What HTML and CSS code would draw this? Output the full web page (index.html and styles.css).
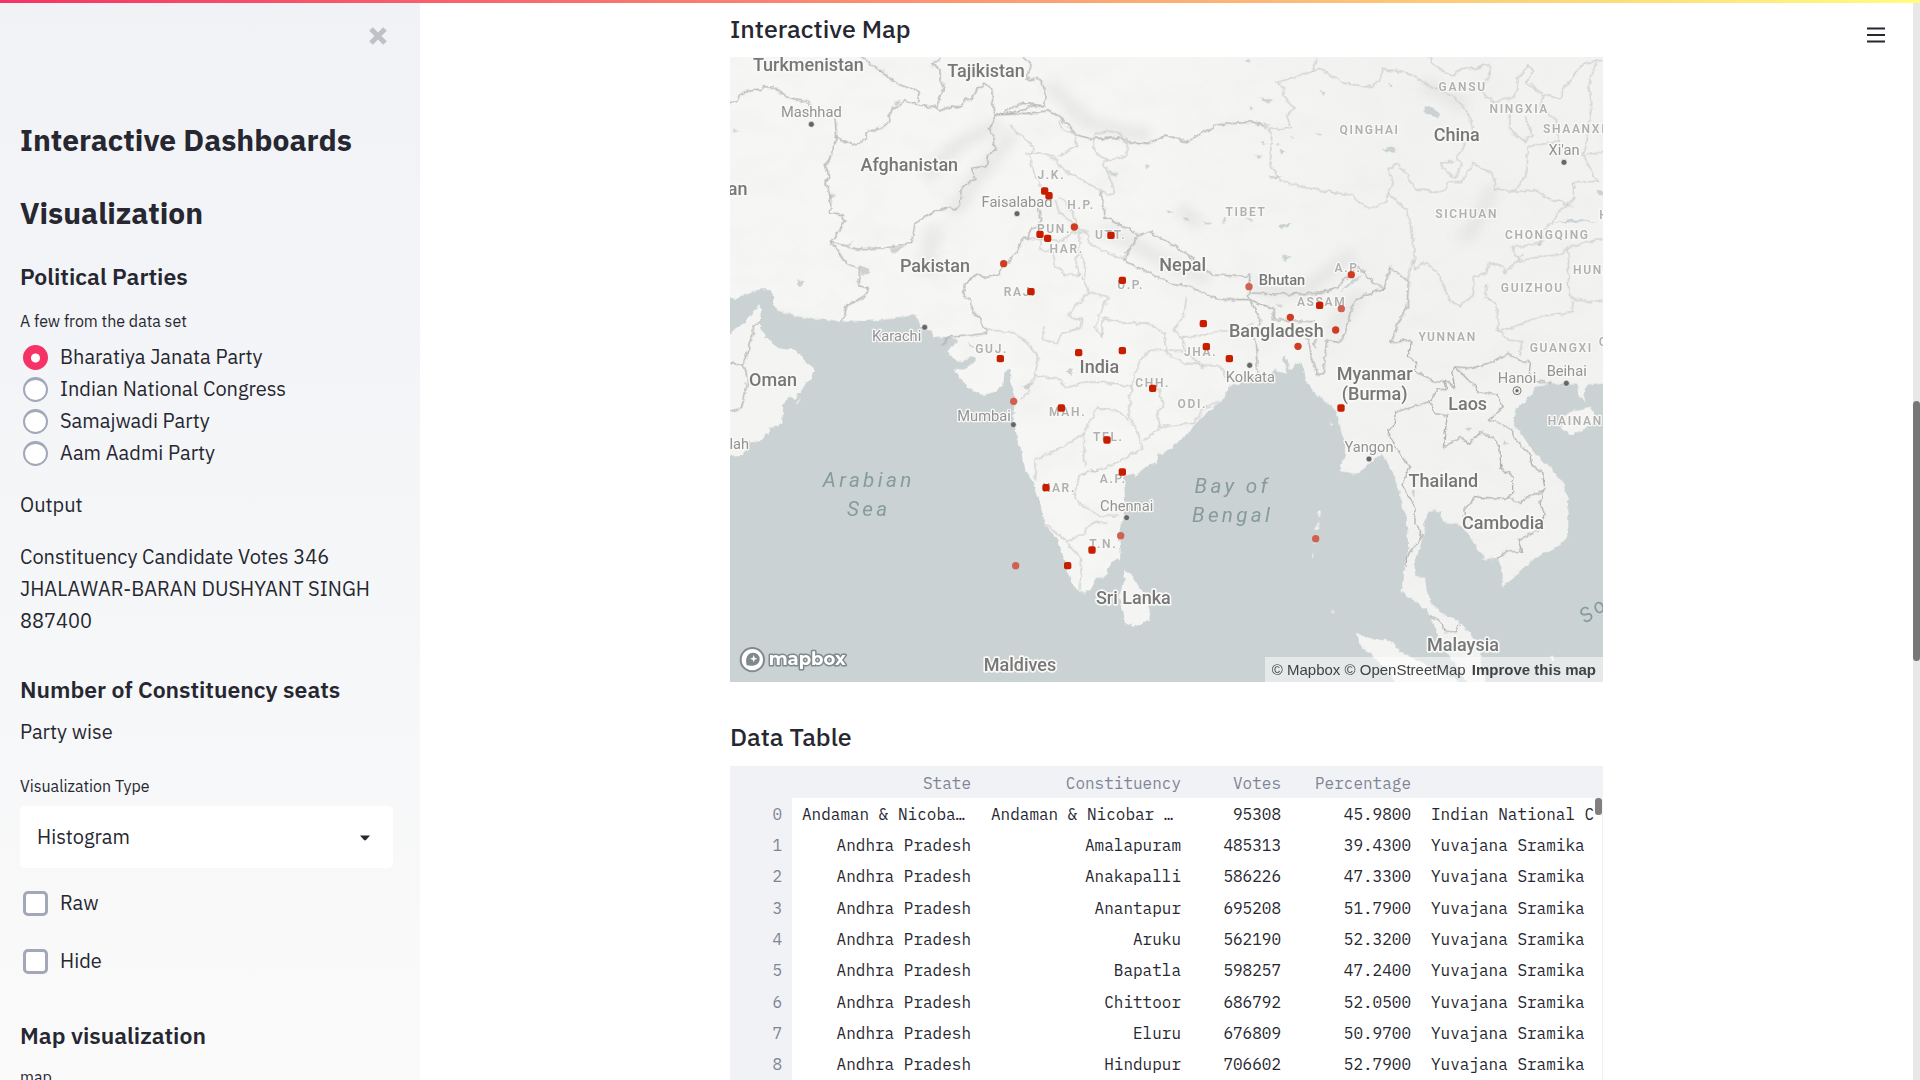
FILE: index.html
```html
<!DOCTYPE html>
<html lang="en">
<head>
<meta charset="utf-8">
<title>Interactive Dashboards</title>
<link rel="stylesheet" href="styles.css">
</head>
<body>
<div class="decoration"></div>
<div class="app">
  <aside class="sidebar">
    <button class="icon-button close" aria-label="Close sidebar">
      <svg width="18" height="18" viewBox="0 0 18 18"><path d="M2 2L16 16M16 2L2 16" stroke="#c0c1c6" stroke-width="5" fill="none"/></svg>
    </button>
    <h1 class="title">Interactive Dashboards</h1>
    <h1 class="title">Visualization</h1>
    <h3 class="subhead first">Political Parties</h3>
    <fieldset class="parties">
      <legend class="small-label">A few from the data set</legend>
      <label class="choice"><input class="radio" type="radio" name="party" checked><span>Bharatiya Janata Party</span></label>
      <label class="choice"><input class="radio" type="radio" name="party"><span>Indian National Congress</span></label>
      <label class="choice"><input class="radio" type="radio" name="party"><span>Samajwadi Party</span></label>
      <label class="choice"><input class="radio" type="radio" name="party"><span>Aam Aadmi Party</span></label>
    </fieldset>
    <p class="text">Output</p>
    <p class="text">Constituency Candidate Votes 346 JHALAWAR-BARAN DUSHYANT SINGH 887400</p>
    <h3 class="subhead">Number of Constituency seats</h3>
    <p class="text party-wise">Party wise</p>
    <label class="small-label" for="viz">Visualization Type</label>
    <div class="select-box">
      <select id="viz" class="select"><option>Histogram</option></select>
      <svg class="caret" width="10" height="6" viewBox="0 0 10 6"><path d="M0 0.5H10L6 5Q5 5.8 4 5Z" fill="#262730"/></svg>
    </div>
    <label class="choice tick"><input class="checkbox" type="checkbox"><span>Raw</span></label>
    <label class="choice tick"><input class="checkbox" type="checkbox"><span>Hide</span></label>
    <h3 class="subhead last">Map visualization</h3>
    <p class="small-label">map</p>
  </aside>

  <main class="main">
    <button class="icon-button menu" aria-label="Main menu">
      <svg width="18" height="16" viewBox="0 0 18 16"><path d="M0 1.5H18M0 8H18M0 14.5H18" stroke="#262730" stroke-width="2"/></svg>
    </button>
    <div class="content">
      <h2 class="heading">Interactive Map</h2>
      <div class="map">
        <svg class="map-canvas" viewBox="30 171 2619 1875" role="img" aria-label="Map of South Asia">
          <defs>
            <filter id="rough" x="-5%" y="-5%" width="110%" height="110%">
              <feTurbulence type="fractalNoise" baseFrequency="0.05" numOctaves="3" seed="4"/>
              <feDisplacementMap in="SourceGraphic" scale="16" xChannelSelector="R" yChannelSelector="G"/>
            </filter>
            <filter id="relief" x="0" y="0" width="100%" height="100%">
              <feTurbulence type="fractalNoise" baseFrequency="0.008 0.012" numOctaves="4" seed="8"/>
              <feColorMatrix values="0 0 0 0 .84  0 0 0 0 .84  0 0 0 0 .84  2.6 0 0 0 -1.15"/>
            </filter>
            <filter id="soft" x="-30%" y="-30%" width="160%" height="160%"><feGaussianBlur stdDeviation="16"/></filter>
            <linearGradient id="ground"><stop offset=".45" stop-color="#f6f6f4"/><stop offset=".75" stop-color="#f2f2f1"/></linearGradient>
          </defs>
          <rect x="30" y="171" width="2619" height="1875" fill="url(#ground)"/>
          <rect x="30" y="171" width="2619" height="1875" filter="url(#relief)" opacity=".35"/>
          <g class="ridge" filter="url(#soft)">
            <path d="M610 530L720 430L840 370M700 640L780 520L880 400M980 250L1110 370L1290 410M1380 620L1440 680"/>
            <path d="M1150 680L1320 780L1470 840M1600 860L1760 870L1820 820L1900 760M2230 720L2280 650L2320 560"/>
            <path d="M620 830L640 680M1830 1000L1920 880M2110 250L2240 320"/>
          </g>
          <g filter="url(#rough)">
            <g class="water">
              <path d="M0 892L50 897L75 885L115 868L150 866L158 885L162 918L185 935L225 948L270 955L330 960L365 966L430 962L480 960L530 955L583 945L598 965L605 985L635 992L640 1012L665 1015L690 1010L712 1020L700 1035L685 1055L700 1075L730 1085L752 1072L770 1074L755 1092L730 1108L703 1108L715 1128L740 1160L790 1186L830 1173L850 1155L853 1115L872 1107L875 1150L885 1200L880 1250L890 1310L905 1360L910 1400L930 1430L945 1465L958 1500L968 1540L975 1575L1010 1615L1030 1670L1040 1715L1065 1760L1090 1782L1112 1770L1125 1740L1162 1725L1165 1705L1180 1682L1200 1680L1202 1650L1195 1595L1210 1560L1215 1500L1212 1430L1240 1420L1248 1432L1268 1405L1310 1390L1315 1365L1345 1350L1390 1315L1430 1265L1470 1230L1515 1190L1525 1160L1560 1150L1610 1122L1640 1128L1665 1110L1700 1122L1688 1075L1695 1065L1710 1110L1745 1085L1755 1140L1780 1175L1830 1215L1850 1235L1860 1280L1875 1330L1875 1365L1860 1410L1910 1425L1945 1390L1985 1365L2000 1380L2020 1420L2040 1480L2045 1520L2060 1550L2065 1650L2050 1710L2045 1775L2080 1800L2120 1830L2150 1890L2180 1960L2220 2010L2260 2080L0 2080Z"/>
              <path transform="translate(1320 1020)" d="M775 712L795 712L800 750L815 790L850 825L890 840L930 880L960 930L965 990L985 1060L1400 1060L1400 125L1290 130L1272 150L1275 185L1255 165L1250 130L1170 130L1130 140L1110 170L1070 205L1060 250L1090 290L1120 335L1170 380L1210 430L1225 490L1225 590L1190 620L1150 640L1110 665L1075 700L1050 725L1025 740L1025 680L1010 655L985 660L950 625L935 600L910 560L880 550L845 545L845 512L810 515L800 530L790 590L770 650L762 690Z"/>
              <path d="M415 795L440 805L450 820L425 825ZM510 745L560 735L535 755L515 760ZM365 735L405 722L385 735ZM522 302L540 300L540 312L525 315ZM235 840L250 845L245 862L232 858ZM330 575L345 588L332 594ZM465 200L495 212L480 215ZM38 390L60 392L42 398ZM1160 515L1195 520L1185 530ZM1273 495L1290 498L1280 505Z"/>
              <path transform="translate(1320 0)" d="M790 320L815 318L838 340L835 355L795 340ZM300 295L340 302L325 310ZM265 322L280 325L272 335ZM668 447L705 440L705 458L680 455ZM355 675L392 668L385 680L362 690ZM250 182L272 180L268 190ZM478 272L498 278L488 282ZM685 252L702 256L690 264ZM308 366L328 374L318 378ZM280 462L308 468L295 474ZM358 450L380 456L365 464ZM388 408L405 412L395 416ZM20 630L42 637L25 640ZM68 655L88 657L75 662ZM130 662L158 668L145 677ZM182 670L195 650L198 660ZM258 652L280 660L270 664ZM362 762L395 770L375 782ZM300 425L320 428L312 433ZM348 432L366 434L355 438ZM325 530L365 525L345 538ZM465 400L485 405L478 410ZM540 875L575 840L605 830L575 855ZM350 915L370 912L355 922ZM1310 572L1329 576L1329 584L1312 582ZM1185 668L1230 660L1270 658L1305 668L1265 664L1220 668ZM1125 735L1155 720L1140 735Z"/>
              <path d="M1040 1115L1060 1105L1055 1128ZM1110 1405L1140 1412L1120 1418ZM905 1160L945 1145L925 1168ZM745 1025L765 1045L750 1042ZM2235 1285L2258 1288L2245 1296ZM2345 1318L2370 1335L2350 1330ZM2075 1475L2085 1470L2082 1490Z"/>
            </g>
            <g class="land">
              <path d="M0 1020L60 978L90 950L118 915L125 940L122 975L130 1000L150 1022L180 1045L235 1055L250 1080L282 1105L275 1130L250 1160L225 1198L210 1190L190 1210L187 1268L150 1285L130 1320L75 1325L85 1340L70 1365L0 1368Z"/>
              <path d="M1212 1708L1235 1725L1255 1760L1275 1790L1290 1825L1285 1860L1240 1882L1215 1868L1205 1830L1200 1780L1214 1740Z"/>
              <g transform="translate(1320 1020)">
                <path d="M1200 245L1230 215L1290 200L1305 220L1298 250L1240 285L1205 270ZM588 882L610 885L640 898L690 900L720 935L760 955L800 975L880 1010L905 1050L720 1050L680 990L630 940L595 905ZM475 515H482L480 530H475ZM472 545H478L474 570H468ZM462 600L470 598L466 612ZM456 640H461L458 652H454ZM515 805L523 815L520 822L515 816ZM1170 950L1182 946L1184 960L1175 966ZM965 655H985L978 662ZM510 245L525 250L515 256Z"/>
              </g>
              <path d="M1690 1115L1696 1090L1702 1112ZM230 1208L243 1195L236 1210Z"/>
            </g>
            <g class="border">
              <path d="M30 310L50 305L58 288L85 270L125 268L130 260L165 262L175 275L215 295L260 302L272 320M345 355L350 410L330 475L315 495L325 520L318 550L332 590L332 637L368 645L375 665L332 725L410 747L500 743L575 728L585 670L640 635L685 622L705 630L718 615L725 560L765 538L755 505L800 498L805 465L825 450L822 415L808 388L830 345L870 340L940 318L975 318L975 290L968 240L920 238L930 195L910 171M350 410L398 435L438 418L438 398L480 385L505 370L512 325L545 315L555 302L620 320L640 318L658 333L695 318L720 322L735 298L758 296L770 270L795 250L815 265L820 330L828 348L870 325L910 310L975 318M425 171L540 255L598 275L593 305M650 322L660 290L675 265L660 240L660 210L632 190L660 178M332 725L380 790L418 805L418 858L442 865L438 890L400 905L380 912L378 932L365 966"/>
              <path d="M830 345L925 340L985 332L1025 355L1070 405L1110 415L1215 415L1220 425L1285 430L1335 405L1400 425L1490 375L1600 365L1640 382M955 620L965 660L930 695L928 715L908 715L885 765L845 800L838 822L790 835L770 820L730 860L728 885L755 905L755 935L780 950L800 1000L720 1010L685 1010L665 1035"/>
              <path d="M1140 575L1150 605L1155 650L1255 705L1290 695L1400 760L1475 825L1590 830L1585 860M1255 705L1210 780L1290 820L1350 848L1410 860L1485 895L1530 900L1585 898L1590 825M1585 878L1660 882L1800 880L1850 865L1910 800L1960 845L1992 865L2010 800L2065 845L2062 920L2030 980L2012 1030L2075 1018M1992 865L1920 890L1895 920L1875 1000L1855 1030L1820 1020L1810 1120L1790 1125L1770 1060L1760 1000M1585 898L1660 925L1660 960L1785 965L1785 1045M1590 900L1620 960L1605 1010L1612 1100L1615 1120"/>
              <path d="M30 1090L70 1093L100 1000L100 975L122 965M70 1093L85 1140L65 1222L30 1235"/>
              <g transform="translate(1320 1020)"><path d="M755 0L745 50L770 70L770 95L830 130L855 120L860 145L830 150L810 185L710 215L700 260L683 272L705 320L750 380L725 435L765 495L765 550L787 590L740 650L738 680M855 120L885 145L875 95L885 80L935 85L1000 65L1045 40L1080 62L1112 65L1108 100L1130 122L1175 130M885 80L940 135L955 155L1010 165L1030 200L985 238L1050 265L1070 300L1110 345L1115 375L1145 395L1152 455L1105 468L1080 490L1050 475L945 472L912 510L915 560M810 185L825 220L862 228L855 280L850 322L900 292L925 308L960 278L1000 290L1020 325L1022 385L1058 410L1058 460L1040 475M1150 460L1140 490L1152 520L1145 565L1075 600L1085 635L1040 635L1010 655M810 830L850 852L855 878L885 872L898 852"/></g>
            </g>
            <g class="state">
              <path d="M915 462L960 458L1015 470L1070 440L1060 400L1025 385L1020 360M870 375L895 400L940 440L935 460M995 470L1035 515L1070 530L1130 565L1165 585L1185 580L1175 545L1150 490L1165 480L1220 470L1222 425L1200 400L1160 392L1125 405L1118 440L1135 465L1165 480M930 462L935 500L960 560M1020 590L1060 640L1075 690L1105 695M1005 600L1020 640L1060 670M930 715L1030 722L1060 695L1100 700L1115 735L1170 760L1220 780M960 720L960 750L1000 755L1005 795L1035 825L1080 825L1065 790L1075 760L1080 695M1080 750L1095 800L1090 835L1105 875L1165 890L1145 930L1125 980L1145 1010L1150 955L1190 965L1285 970L1335 1000L1340 1060M1105 880L1045 940L1060 955L1085 960L1080 985L1025 1000L1010 1030L970 1020L975 980M800 990L875 995L920 1025L955 1075L945 1125L930 1160"/>
              <path d="M945 1125L1025 1140L1035 1165L1095 1145L1190 1150L1235 1160L1260 1080L1290 1050L1400 1055M1235 1160L1225 1240L1255 1300L1265 1345L1180 1395L1095 1420L1080 1425L1060 1480L1075 1510L1110 1530L1145 1550L1195 1545M905 1200L930 1170L918 1155M1090 1300L1060 1320L1010 1350L945 1380L945 1440M1090 1300L1110 1265L1130 1225L1200 1235L1225 1260M1090 1300L1095 1400M975 1570L1040 1625L1095 1600L1110 1570L1160 1565M1040 1625L1085 1680L1080 1770M1340 1060L1400 1090L1500 1100L1520 1130M1270 1325L1320 1280L1310 1230L1330 1220L1315 1160M1320 1280L1420 1270L1450 1225L1510 1200"/>
              <path d="M1400 890L1390 950L1360 990L1380 1010L1440 1010L1500 990L1560 990L1600 970M1380 1010L1400 1060L1450 1100"/>
              <g transform="translate(1320 0)"><path d="M470 171L455 215L350 248L370 260L372 290L405 325L380 345L395 385L322 388L335 410L330 495L360 540L420 560L530 580L580 585L600 610L630 625L680 605L685 580L740 630L755 680L763 770L765 810M455 212L485 208L550 250L635 262L665 235L668 208L750 220L810 260L880 290L920 330L940 385L910 440L890 475L905 495L885 535L845 500L845 485L885 485M685 575L700 550L685 510L710 490L740 520L765 565L830 578L860 565L865 545L905 545L940 490L1000 525L1005 565L1060 575L1120 570L1185 605L1195 600L1240 625M805 171L840 210L880 230L905 205L945 205L990 190L990 225L960 270L1000 305L1065 290L1075 235L1105 195L1118 215L1100 245L1150 285L1200 295L1215 260L1270 190L1329 180M1150 285L1140 320L1190 360L1195 425L1105 440L1100 520L1065 575M1050 340L1050 390L1095 425L1115 405L1095 350M1310 180L1285 260L1295 310L1280 430L1270 460L1290 510L1315 545L1240 545L1240 600L1190 640L1180 670L1145 690L1145 725L1080 740L1055 740L1080 785L1125 770L1200 765L1225 740L1225 860L1230 895L1290 905L1329 900M1280 465L1329 455M1225 740L1329 715M765 810L790 785L830 815L870 900L900 920L940 885L940 830L980 820L985 790L1030 800L1035 820L1090 765M980 850L975 890L1010 915L1015 990L1050 985L1135 950L1235 935L1240 905M1015 985L1045 1020L1085 1025L1080 1065M740 840L765 770"/></g>
            </g>
          </g>

          <g class="country">
            <text x="265" y="213">Turkmenistan</text><text x="798" y="230">Tajikistan</text><text x="568" y="514">Afghanistan</text>
            <text x="53" y="584">an</text><text x="645" y="815">Pakistan</text><text x="1388" y="812">Nepal</text>
            <text x="2210" y="422">China</text><text x="1669" y="1012">Bangladesh</text><text class="minor" x="1686" y="855">Bhutan</text>
            <text x="159" y="1159">Oman</text><text x="1138" y="1119">India</text><text x="1240" y="1812">Sri Lanka</text>
            <text x="900" y="2013">Maldives</text><text x="1964" y="1140">Myanmar</text><text x="1964" y="1201">(Burma)</text>
            <text x="2243" y="1230">Laos</text><text x="2170" y="1460">Thailand</text><text x="2349" y="1587">Cambodia</text>
            <text x="2229" y="1954">Malaysia</text>
          </g>
          <g class="city">
            <text x="274" y="351">Mashhad</text><text x="891" y="620">Faisalabad</text><text x="530" y="1023">Karachi</text>
            <text x="792" y="1262">Mumbai</text><text x="1220" y="1532">Chennai</text><text x="58" y="1348">lah</text>
            <text x="2532" y="465">Xi'an</text><text x="1591" y="1147">Kolkata</text><text x="2391" y="1149">Hanoi</text>
            <text x="2540" y="1128">Beihai</text><text x="1947" y="1356">Yangon</text>
          </g>
          <g class="province">
            <text x="994" y="537">J.K.</text><text x="1083" y="626">H.P.</text><text x="1002" y="699">PUN.</text><text x="1172" y="718">UTT.</text>
            <text x="1040" y="758">HAR.</text><text x="1232" y="867">U.P.</text><text x="900" y="887">RAJ.</text><text x="815" y="1058">GUJ.</text>
            <text x="1043" y="1247">MAH.</text><text x="1165" y="1324">TEL.</text><text x="1180" y="1450">A.P.</text><text x="1018" y="1477">KAR.</text>
            <text x="1150" y="1644">T.N.</text><text x="1298" y="1160">CHH.</text><text x="1442" y="1068">JHA.</text><text x="1417" y="1223">ODI.</text>
            <text x="1884" y="815">A.P.</text><text x="1805" y="919">ASSAM</text><text x="1578" y="647">TIBET</text><text x="1949" y="402">QINGHAI</text>
            <text x="2228" y="273">GANSU</text><text x="2398" y="338">NINGXIA</text><text class="cut" x="2469" y="398">SHAANXI</text>
            <text x="2240" y="654">SICHUAN</text><text x="2482" y="717">CHONGQING</text><text x="2437" y="875">GUIZHOU</text>
            <text class="cut" x="2559" y="823">HUNAN</text><text x="2183" y="1023">YUNNAN</text><text x="2524" y="1056">GUANGXI</text><text x="2566" y="1275">HAINAN</text>
            <text class="cut" x="2638" y="657">H</text><text class="cut" x="2636" y="1038">G</text>
          </g>
          <g class="sea">
            <text x="446" y="1460">Arabian</text><text x="446" y="1547">Sea</text>
            <text x="1538" y="1479">Bay of</text><text x="1538" y="1567">Bengal</text>
            <text class="cut" x="2596" y="1872" transform="rotate(-35 2596 1872)">Sou</text>
          </g>
          <g class="place">
            <circle cx="274" cy="373" r="9"/><circle cx="891" cy="641" r="9"/><circle cx="614" cy="982" r="9"/><circle cx="880" cy="1274" r="9"/>
            <circle cx="1220" cy="1553" r="9"/><circle cx="2532" cy="487" r="9"/><circle cx="1589" cy="1096" r="9"/><circle cx="2539" cy="1150" r="9"/>
            <circle cx="1947" cy="1377" r="9"/><circle cx="2391" cy="1172" r="6"/><circle class="ring" cx="2391" cy="1172" r="12"/>
          </g>
          <g class="seat solid">
            <rect x="963" y="562" width="22" height="22" rx="6"/><rect x="976" y="576" width="22" height="22" rx="6"/>
            <rect x="949" y="692" width="22" height="22" rx="6"/><rect x="972" y="704" width="22" height="22" rx="6"/>
            <rect x="1162" y="695" width="22" height="22" rx="6"/><rect x="922" y="864" width="22" height="22" rx="6"/>
            <rect x="1196" y="830" width="22" height="22" rx="6"/><rect x="830" y="1065" width="22" height="22" rx="6"/>
            <rect x="1065" y="1047" width="22" height="22" rx="6"/><rect x="1196" y="1041" width="22" height="22" rx="6"/>
            <rect x="1287" y="1154" width="22" height="22" rx="6"/><rect x="1013" y="1213" width="22" height="22" rx="6"/>
            <rect x="1150" y="1309" width="22" height="22" rx="6"/><rect x="1196" y="1405" width="22" height="22" rx="6"/>
            <rect x="967" y="1452" width="22" height="22" rx="6"/><rect x="1105" y="1639" width="22" height="22" rx="6"/>
            <rect x="1032" y="1686" width="22" height="22" rx="6"/><rect x="1439" y="960" width="22" height="22" rx="6"/>
            <rect x="1448" y="1029" width="22" height="22" rx="6"/><rect x="1517" y="1065" width="22" height="22" rx="6"/>
            <rect x="1788" y="905" width="22" height="22" rx="6"/><rect x="1852" y="1213" width="22" height="22" rx="6"/>
          </g>
          <g class="seat medium">
            <circle cx="1063" cy="681" r="11"/><circle cx="851" cy="791" r="11"/><circle cx="1894" cy="824" r="11"/>
            <circle cx="1711" cy="952" r="11"/><circle cx="1847" cy="990" r="11"/><circle cx="1734" cy="1039" r="11"/>
          </g>
          <g class="seat light">
            <circle cx="1587" cy="860" r="11"/><circle cx="1864" cy="926" r="11"/><circle cx="881" cy="1204" r="11"/>
            <circle cx="1202" cy="1607" r="11"/><circle cx="887" cy="1697" r="11"/><circle cx="1787" cy="1616" r="11"/>
          </g>
          <g class="brand">
            <circle cx="97" cy="1979" r="35" fill="#fff" stroke="#7f8a8b" stroke-width="6"/>
            <path d="M80 1996C74 1972 84 1958 100 1958A19 19 0 0 1 119 1977C119 1993 104 2001 80 1996Z" fill="#7f8a8b"/>
            <path d="M101 1965L104 1973L112 1976L104 1979L101 1987L98 1979L90 1976L98 1973Z" fill="#fff"/>
            <text x="146" y="1996">mapbox</text>
          </g>
        </svg>
        <div class="attribution"><a href="#mapbox">© Mapbox</a> <a href="#osm">© OpenStreetMap</a> <a class="improve" href="#improve">Improve this map</a></div>
      </div>

      <h2 class="heading second">Data Table</h2>
      <div class="table-frame">
        <table class="data">
          <colgroup><col class="c-index"><col class="c-state"><col class="c-const"><col class="c-votes"><col class="c-pct"><col></colgroup>
          <thead><tr><th></th><th>State</th><th>Constituency</th><th>Votes</th><th>Percentage</th><th></th></tr></thead>
          <tbody>
            <tr><th>0</th><td>Andaman &amp; Nicobar Islands</td><td>Andaman &amp; Nicobar Islands</td><td>95308</td><td>45.9800</td><td>Indian National Congress</td></tr>
            <tr><th>1</th><td>Andhra Pradesh</td><td>Amalapuram</td><td>485313</td><td>39.4300</td><td>Yuvajana Sramika</td></tr>
            <tr><th>2</th><td>Andhra Pradesh</td><td>Anakapalli</td><td>586226</td><td>47.3300</td><td>Yuvajana Sramika</td></tr>
            <tr><th>3</th><td>Andhra Pradesh</td><td>Anantapur</td><td>695208</td><td>51.7900</td><td>Yuvajana Sramika</td></tr>
            <tr><th>4</th><td>Andhra Pradesh</td><td>Aruku</td><td>562190</td><td>52.3200</td><td>Yuvajana Sramika</td></tr>
            <tr><th>5</th><td>Andhra Pradesh</td><td>Bapatla</td><td>598257</td><td>47.2400</td><td>Yuvajana Sramika</td></tr>
            <tr><th>6</th><td>Andhra Pradesh</td><td>Chittoor</td><td>686792</td><td>52.0500</td><td>Yuvajana Sramika</td></tr>
            <tr><th>7</th><td>Andhra Pradesh</td><td>Eluru</td><td>676809</td><td>50.9700</td><td>Yuvajana Sramika</td></tr>
            <tr><th>8</th><td>Andhra Pradesh</td><td>Hindupur</td><td>706602</td><td>52.7900</td><td>Yuvajana Sramika</td></tr>
          </tbody>
        </table>
        <div class="table-track"><div class="table-thumb"></div></div>
      </div>
    </div>
  </main>
  <div class="scrollbar"><div class="scroll-thumb"></div></div>
</div>
</body>
</html>
```
FILE: styles.css
```css
* { box-sizing: border-box; }
body {
  margin: 0;
  height: 100vh;
  overflow: hidden;
  background: #fff;
  color: #262730;
  font-family: "IBM Plex Sans", "Noto Sans", sans-serif;
  font-size: 20px;
  font-weight: 400;
  line-height: 32px;
}
.decoration {
  position: absolute;
  z-index: 2;
  top: 0;
  left: 0;
  right: 0;
  height: 3px;
  background: linear-gradient(to right, #f63366, #fffd80);
}
.app {
  display: grid;
  grid-template-columns: 420px 1fr 7px;
  height: 100vh;
}
h1, h2, h3, p { margin: 0; }

.sidebar {
  position: relative;
  overflow: hidden;
  padding: 120px 27px 0 20px;
  background: linear-gradient(#f0f2f6, #fafafa);
}
.icon-button {
  display: flex;
  padding: 0;
  border: 0;
  background: none;
  cursor: pointer;
}
.close { position: absolute; top: 27px; right: 33px; }
.menu { position: absolute; top: 27px; right: 28px; }
.title {
  font-size: 30px;
  font-weight: 700;
  line-height: 40px;
}
.title + .title { margin-top: 33px; }
.subhead {
  margin-top: 36px;
  font-size: 23px;
  font-weight: 600;
  line-height: 32px;
}
.subhead.first { margin-top: 27px; }
.subhead.last { margin: 42px 0 14px; }
.parties {
  margin: 17px 0 20px;
  padding: 0;
  border: 0;
}
.small-label {
  display: block;
  margin-bottom: 8px;
  padding: 0;
  font-size: 16px;
  line-height: 24px;
}
.text { margin-bottom: 20px; }
.party-wise { margin: 11px 0 26px; }
.choice {
  display: flex;
  align-items: center;
  gap: 12px;
  padding-left: 3px;
}
.radio, .checkbox {
  appearance: none;
  width: 25px;
  height: 25px;
  margin: 0;
  border: 2px solid #a3a8b8;
  border-top-width: 3px;
  background: #fff;
}
.radio { border-radius: 50%; }
.radio:checked {
  border-color: #f63366;
  background: radial-gradient(circle, #fff 4px, #f63366 5px);
}
.checkbox { border-width: 3px; border-radius: 5px; }
.tick { margin-top: 19px; }
.tick + .tick { margin-top: 26px; }
.select-box { position: relative; }
.select {
  appearance: none;
  display: block;
  width: 100%;
  height: 62px;
  padding: 0 17px;
  border: 0;
  border-radius: 5px;
  background: #fff;
  color: inherit;
  font: inherit;
}
.caret { position: absolute; top: 29px; right: 23px; pointer-events: none; }

.main { position: relative; overflow: hidden; padding-top: 13px; }
.content { max-width: 873px; margin: 0 auto; }
.heading {
  margin-bottom: 12px;
  font-size: 25px;
  font-weight: 500;
  line-height: 32px;
}
.heading.second { margin: 39px 0 13px; }

.map { position: relative; background: #cad2d3; }
.map-canvas { display: block; width: 100%; }
.map-canvas text {
  font-family: "DIN Pro", Roboto, sans-serif;
  text-anchor: middle;
  paint-order: stroke;
  stroke-linejoin: round;
}
.map-canvas .cut { text-anchor: start; }
.ridge path { fill: none; stroke: #d9d9da; stroke-width: 44; opacity: .45; }
.water path { fill: #cad2d3; }
.land path { fill: #f4f4f2; }
.border path, .state path { fill: none; stroke: #b2b2b2; stroke-width: 4; stroke-linejoin: round; }
.state path { stroke: #cfcfcf; }
.country text { font-size: 54px; font-weight: 500; fill: #777; stroke: #f8f8f7; stroke-width: 10px; }
.country .minor { font-size: 44px; }
.city text { font-size: 44px; font-weight: 400; fill: #939393; stroke: #f8f8f7; stroke-width: 8px; }
.province text { font-size: 36px; font-weight: 600; letter-spacing: 5px; fill: #b0b0b0; stroke: #f8f8f7; stroke-width: 8px; }
.sea text { font-size: 62px; font-style: italic; letter-spacing: 10px; fill: #879b9c; }
.place circle { fill: #666; stroke: #f8f8f7; stroke-width: 2; }
.place .ring { fill: none; stroke: #777; stroke-width: 3; }
.seat.solid { fill: #c81e00; }
.seat.medium { fill: #d03c22; }
.seat.light { fill: #d06050; }
.map-canvas .brand text {
  font-family: Montserrat, Inter, sans-serif;
  font-size: 54px;
  font-weight: 700;
  text-anchor: start;
  fill: #fff;
  stroke: #7f8a8b;
  stroke-width: 9px;
}
.attribution {
  position: absolute;
  right: 0;
  bottom: 0;
  padding: 0 7px;
  background: rgba(255, 255, 255, .5);
  font: 15px/25px "Helvetica Neue", "Liberation Sans", Arial, sans-serif;
}
.attribution a { color: #404446; text-decoration: none; }
.attribution .improve { margin-left: 2px; font-weight: 700; }

.table-frame {
  display: grid;
  grid-template-columns: 1fr 7px;
  border: 1px solid #f0f2f6;
  overflow: hidden;
}
.data {
  width: 100%;
  height: 313px;
  table-layout: fixed;
  border-spacing: 0;
  font: 400 16px/30px "IBM Plex Mono", "Liberation Mono", monospace;
}
.c-index { width: 61px; }
.c-state { width: 189px; }
.c-const { width: 210px; }
.c-votes { width: 100px; }
.c-pct { width: 130px; }
.data th, .data td {
  padding: 0 10px;
  overflow: hidden;
  text-align: right;
  text-overflow: ellipsis;
  white-space: nowrap;
  font-weight: 400;
}
.data th { background: #f0f2f6; color: #808495; }
.data thead th { height: 31px; }
.data td:last-child { padding-right: 0; text-align: left; text-overflow: clip; }
.table-track { border-top: 31px solid #f0f2f6; }
.table-thumb {
  height: 17px;
  border-radius: 3px;
  background: #808080;
}
.scrollbar {
  padding-top: 401px;
  background: #e8e8e8;
}
.scroll-thumb {
  height: 260px;
  border-radius: 4px;
  background: #777;
}
```
